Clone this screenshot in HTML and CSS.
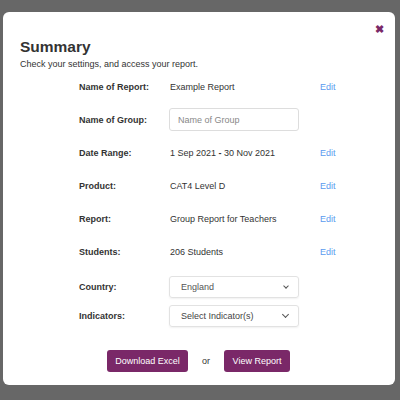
FILE: index.html
```html
<!DOCTYPE html>
<html lang="en">
<head>
    <meta charset="UTF-8">
    <title>Summary</title>
    <link rel="stylesheet" href="styles.css">
</head>
<body>
    <div class="modal">
        <span class="close">&#10006;</span>
        <h1>Summary</h1>
        <p class="intro">Check your settings, and access your report.</p>

        <div class="summary">
            <div class="row">
                <span class="label">Name of Report:</span>
                <span class="value">Example Report</span>
                <a class="edit" href="#">Edit</a>
            </div>
            <div class="row">
                <span class="label">Name of Group:</span>
                <input class="field" type="text" placeholder="Name of Group">
                <span></span>
            </div>
            <div class="row">
                <span class="label">Date Range:</span>
                <span class="value">1 Sep 2021 <b>-</b> 30 Nov 2021</span>
                <a class="edit" href="#">Edit</a>
            </div>
            <div class="row">
                <span class="label">Product:</span>
                <span class="value">CAT4 Level D</span>
                <a class="edit" href="#">Edit</a>
            </div>
            <div class="row">
                <span class="label">Report:</span>
                <span class="value">Group Report for Teachers</span>
                <a class="edit" href="#">Edit</a>
            </div>
            <div class="row">
                <span class="label">Students:</span>
                <span class="value">206 Students</span>
                <a class="edit" href="#">Edit</a>
            </div>
        </div>

        <div class="options">
            <div class="opt">
                <span class="label">Country:</span>
                <div class="select small">England <span class="chev"></span></div>
            </div>
            <div class="opt">
                <span class="label">Indicators:</span>
                <div class="select">Select Indicator(s) <span class="chev"></span></div>
            </div>
        </div>

        <div class="actions">
            <button class="excel">Download Excel</button>
            <span class="or">or</span>
            <button class="view">View Report</button>
        </div>
    </div>
</body>
</html>
```

FILE: styles.css
```css
body {
    margin: 0;
    background-color: #676767;
    font-family: "Liberation Sans", Arial, sans-serif;
    color: #333;
    height: 400px;
    overflow: hidden;
}
.modal {
    position: relative;
    background-color: #fff;
    margin: 12px 0 0 3px;
    width: 392px;
    height: 373px;
    border-radius: 6px;
    box-sizing: border-box;
    padding: 26px 0 0 17px;
}
.close {
    position: absolute;
    top: 11px;
    right: 11px;
    color: #7a2868;
    font-size: 11px;
    font-weight: bold;
}
h1 {
    margin: 0;
    font-size: 15.5px;
    line-height: 18px;
    color: #333;
}
.intro {
    margin: 2px 0 0;
    font-size: 9px;
    line-height: 12px;
}
.summary {
    margin: 0 0 0 59px;
}
.row {
    display: grid;
    grid-template-columns: 91px 150px auto;
    align-items: center;
    height: 33px;
    font-size: 9px;
}
.label {
    font-weight: bold;
}
.value {
    color: #333;
}
.edit {
    color: #5a9bef;
    text-decoration: none;
}
.field {
    width: 130px;
    height: 23px;
    box-sizing: border-box;
    border: 1px solid #ddd;
    border-radius: 3px;
    padding: 0 8px;
    font-family: inherit;
    font-size: 9px;
    margin-left: -1px;
}
.field::placeholder {
    color: #888;
}
.options {
    margin: 8px 0 0 59px;
    display: flex;
    flex-direction: column;
    gap: 7px;
}
.opt {
    display: grid;
    grid-template-columns: 90px 130px;
    align-items: center;
    font-size: 9px;
}
.select {
    height: 22px;
    box-sizing: border-box;
    border: 1px solid #e2e2e2;
    border-radius: 3px;
    padding: 0 8px 0 11px;
    display: flex;
    align-items: center;
    justify-content: space-between;
    color: #444;
    font-size: 9px;
    box-shadow: 0 1px 2px rgba(0,0,0,0.06);
}
.select.small {
    color: #555;
}
.chev {
    width: 4px;
    height: 4px;
    border-right: 1.5px solid #555;
    border-bottom: 1.5px solid #555;
    transform: rotate(45deg);
    margin: -3px 2px 0 0;
}
.select.small .chev {
    width: 3px;
    height: 3px;
    border-width: 1px;
}
.actions {
    display: flex;
    align-items: center;
    margin: 23px 0 0 87px;
}
button {
    background-color: #7a2868;
    color: #fff;
    border: none;
    border-radius: 3px;
    height: 22px;
    padding: 0;
    font-family: inherit;
    font-size: 9px;
}
.excel {
    width: 81px;
}
.view {
    width: 66px;
}
.or {
    width: 36px;
    text-align: center;
    font-size: 9px;
}
```
